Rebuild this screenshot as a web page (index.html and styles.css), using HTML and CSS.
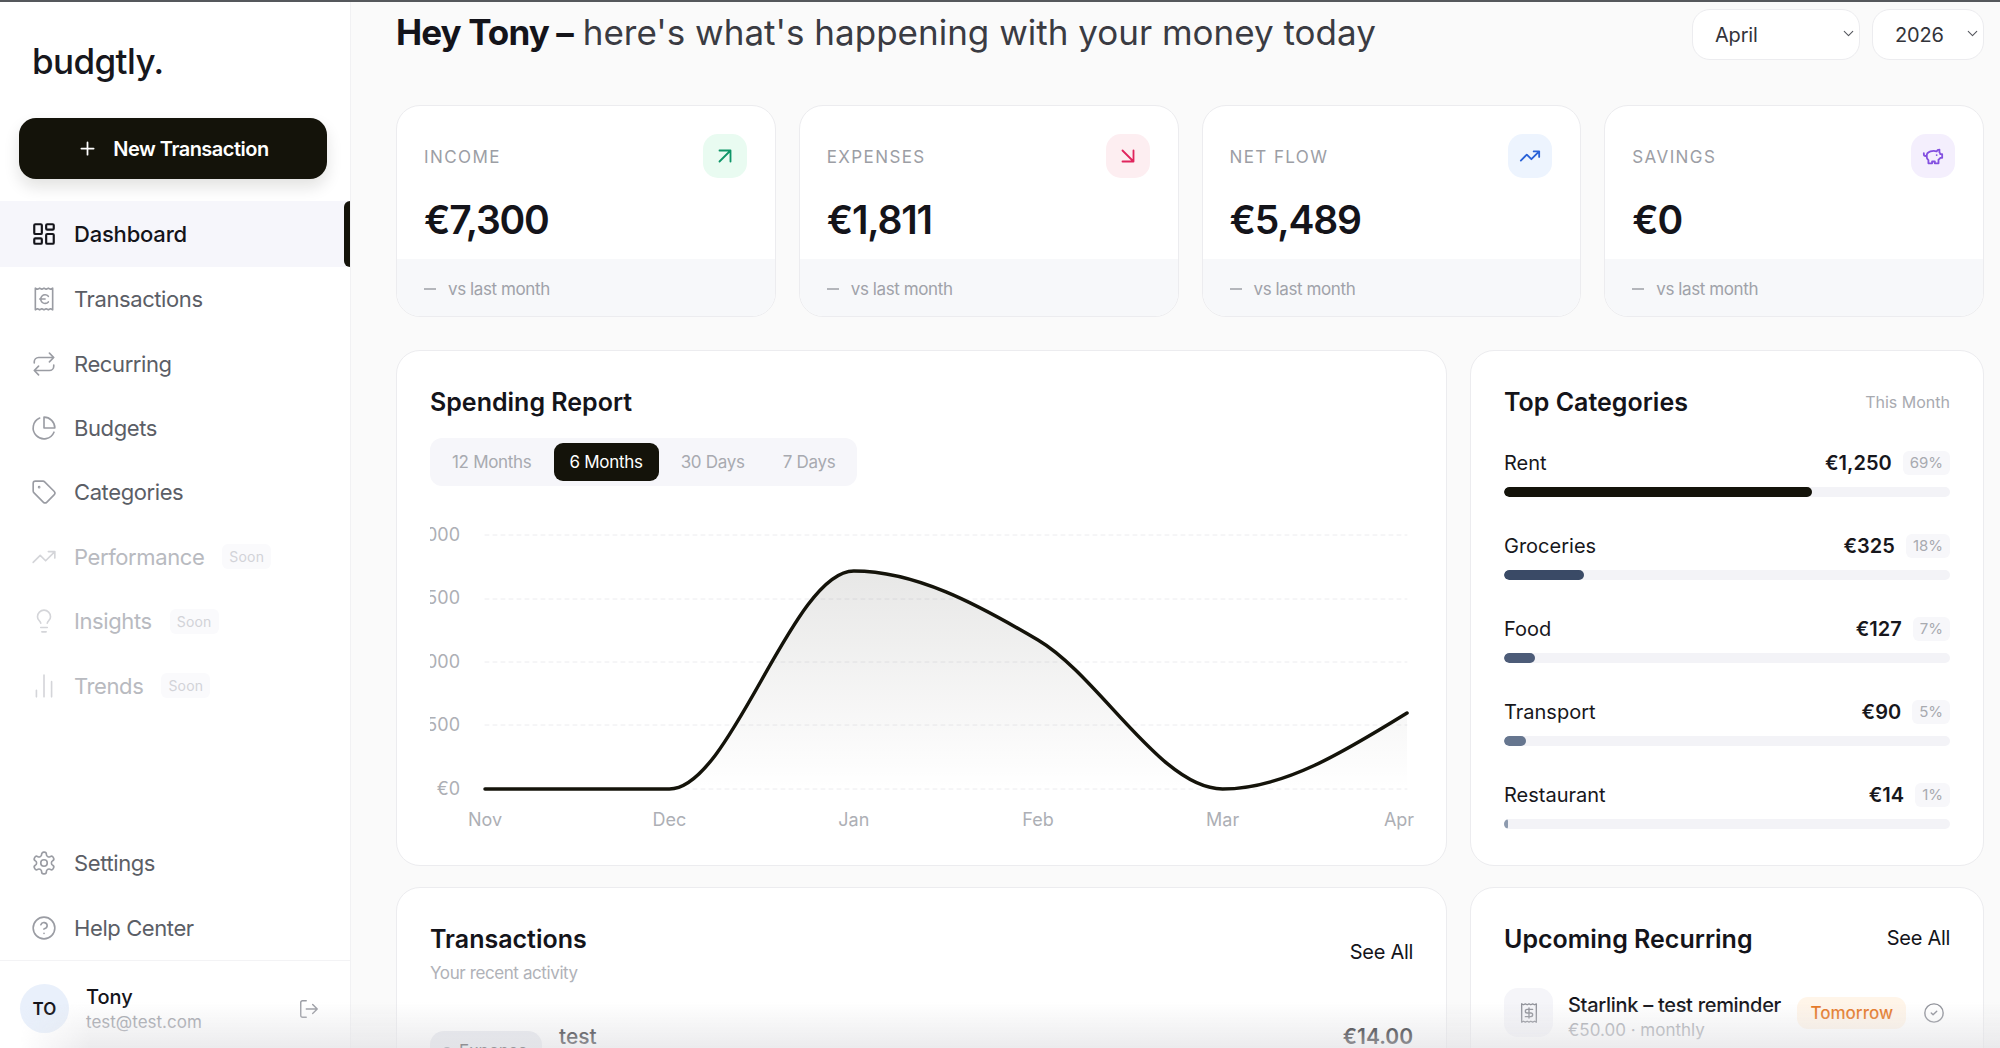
FILE: index.html
```html
<!DOCTYPE html>
<html lang="en">
<head>
    <meta charset="UTF-8">
    <meta name="viewport" content="width=device-width, initial-scale=1.0">
    <title>Dashboard - budgtly</title>
    <link rel="stylesheet" href="styles.css">
</head>
<body>

    <!-- icon set -->
    <svg class="sprite" xmlns="http://www.w3.org/2000/svg">
        <symbol id="i-plus" viewBox="0 0 24 24"><path d="M5 12h14M12 5v14"/></symbol>
        <symbol id="i-dashboard" viewBox="0 0 24 24"><rect x="3" y="3" width="7" height="9" rx="1"/><rect x="14" y="3" width="7" height="5" rx="1"/><rect x="14" y="12" width="7" height="9" rx="1"/><rect x="3" y="16" width="7" height="5" rx="1"/></symbol>
        <symbol id="i-receipt" viewBox="0 0 24 24"><path d="M4 2v20l2-1 2 1 2-1 2 1 2-1 2 1 2-1 2 1V2l-2 1-2-1-2 1-2-1-2 1-2-1-2 1Z"/><path d="M8 12h5M16 9.5a4 4 0 1 0 0 5.2"/></symbol>
        <symbol id="i-repeat" viewBox="0 0 24 24"><path d="m17 2 4 4-4 4M3 11v-1a4 4 0 0 1 4-4h14M7 22l-4-4 4-4M21 13v1a4 4 0 0 1-4 4H3"/></symbol>
        <symbol id="i-pie" viewBox="0 0 24 24"><path d="M21.21 15.89A10 10 0 1 1 8 2.83"/><path d="M22 12A10 10 0 0 0 12 2v10z"/></symbol>
        <symbol id="i-tag" viewBox="0 0 24 24"><path d="M12.586 2.586A2 2 0 0 0 11.172 2H4a2 2 0 0 0-2 2v7.172a2 2 0 0 0 .586 1.414l8.704 8.704a2.426 2.426 0 0 0 3.42 0l6.58-6.58a2.426 2.426 0 0 0 0-3.42z"/><circle cx="7.5" cy="7.5" r=".5"/></symbol>
        <symbol id="i-trend" viewBox="0 0 24 24"><path d="M16 7h6v6M22 7l-8.5 8.5-5-5L2 17"/></symbol>
        <symbol id="i-bulb" viewBox="0 0 24 24"><path d="M15 14c.2-1 .7-1.7 1.5-2.5 1-.9 1.5-2.2 1.5-3.5A6 6 0 0 0 6 8c0 1 .2 2.2 1.5 3.5.7.7 1.3 1.5 1.5 2.5M9 18h6M10 22h4"/></symbol>
        <symbol id="i-bars" viewBox="0 0 24 24"><path d="M5 22v-6M12 22V2M19 22V8"/></symbol>
        <symbol id="i-gear" viewBox="0 0 24 24"><path d="M12.22 2h-.44a2 2 0 0 0-2 2v.18a2 2 0 0 1-1 1.73l-.43.25a2 2 0 0 1-2 0l-.15-.08a2 2 0 0 0-2.73.73l-.22.38a2 2 0 0 0 .73 2.73l.15.1a2 2 0 0 1 1 1.72v.51a2 2 0 0 1-1 1.74l-.15.09a2 2 0 0 0-.73 2.73l.22.38a2 2 0 0 0 2.73.73l.15-.08a2 2 0 0 1 2 0l.43.25a2 2 0 0 1 1 1.73V20a2 2 0 0 0 2 2h.44a2 2 0 0 0 2-2v-.18a2 2 0 0 1 1-1.73l.43-.25a2 2 0 0 1 2 0l.15.08a2 2 0 0 0 2.73-.73l.22-.39a2 2 0 0 0-.73-2.73l-.15-.08a2 2 0 0 1-1-1.74v-.5a2 2 0 0 1 1-1.74l.15-.09a2 2 0 0 0 .73-2.73l-.22-.38a2 2 0 0 0-2.73-.73l-.15.08a2 2 0 0 1-2 0l-.43-.25a2 2 0 0 1-1-1.73V4a2 2 0 0 0-2-2z"/><circle cx="12" cy="12" r="3"/></symbol>
        <symbol id="i-help" viewBox="0 0 24 24"><circle cx="12" cy="12" r="10"/><path d="M9.09 9a3 3 0 0 1 5.83 1c0 2-3 3-3 3M12 17h.01"/></symbol>
        <symbol id="i-logout" viewBox="0 0 24 24"><path d="M9 21H5a2 2 0 0 1-2-2V5a2 2 0 0 1 2-2h4M16 17l5-5-5-5M21 12H9"/></symbol>
        <symbol id="i-up" viewBox="0 0 24 24"><path d="M6 6h12v12M6 18 18 6"/></symbol>
        <symbol id="i-down" viewBox="0 0 24 24"><path d="m6 6 12 12M18 6v12H6"/></symbol>
        <symbol id="i-pig" viewBox="0 0 24 24"><path d="M19 5c-1.5 0-2.8 1.4-3 2-3.5-1.5-11-.3-11 5 0 1.8 0 3 2 4.5V20h4v-2h3v2h4v-4c1-.5 1.7-1 2-2h2v-4h-2c0-1-.5-1.5-1-2V5z"/><path d="M2 9v1c0 1.1.9 2 2 2h1M16 11h.01"/></symbol>
        <symbol id="i-chevron" viewBox="0 0 24 24"><path d="m6 9 6 6 6-6"/></symbol>
        <symbol id="i-dollar" viewBox="0 0 24 24"><path d="M4 2v20l2-1 2 1 2-1 2 1 2-1 2 1 2-1 2 1V2l-2 1-2-1-2 1-2-1-2 1-2-1-2 1Z"/><path d="M16 8h-6a2 2 0 1 0 0 4h4a2 2 0 1 1 0 4H8M12 17.5v-11"/></symbol>
        <symbol id="i-check" viewBox="0 0 24 24"><circle cx="12" cy="12" r="10"/><path d="m9 12 2 2 4-4"/></symbol>
    </svg>

    <div class="app">
        <aside class="sidebar">
            <div class="logo">budgtly.</div>
            <button class="new-btn"><svg class="icon-plus"><use href="#i-plus"/></svg>New Transaction</button>

            <nav class="nav">
                <a class="nav-item active"><svg class="nav-icon"><use href="#i-dashboard"/></svg>Dashboard</a>
                <a class="nav-item"><svg class="nav-icon"><use href="#i-receipt"/></svg>Transactions</a>
                <a class="nav-item"><svg class="nav-icon"><use href="#i-repeat"/></svg>Recurring</a>
                <a class="nav-item"><svg class="nav-icon"><use href="#i-pie"/></svg>Budgets</a>
                <a class="nav-item"><svg class="nav-icon"><use href="#i-tag"/></svg>Categories</a>
                <a class="nav-item soon"><svg class="nav-icon"><use href="#i-trend"/></svg>Performance<span class="soon-tag">Soon</span></a>
                <a class="nav-item soon"><svg class="nav-icon"><use href="#i-bulb"/></svg>Insights<span class="soon-tag">Soon</span></a>
                <a class="nav-item soon"><svg class="nav-icon"><use href="#i-bars"/></svg>Trends<span class="soon-tag">Soon</span></a>
            </nav>

            <nav class="nav nav-bottom">
                <a class="nav-item"><svg class="nav-icon"><use href="#i-gear"/></svg>Settings</a>
                <a class="nav-item"><svg class="nav-icon"><use href="#i-help"/></svg>Help Center</a>
            </nav>

            <div class="user">
                <div class="avatar">TO</div>
                <div class="user-info">
                    <div class="user-name">Tony</div>
                    <div class="user-mail">test@test.com</div>
                </div>
                <svg class="logout"><use href="#i-logout"/></svg>
            </div>
        </aside>

        <main class="main">
            <header class="top">
                <h1 class="greeting"><strong>Hey Tony –</strong> here's what's happening with your money today</h1>
                <div class="filters">
                    <div class="select-wrap month">
                        <select><option>April</option></select>
                        <svg class="chevron"><use href="#i-chevron"/></svg>
                    </div>
                    <div class="select-wrap year">
                        <select><option>2026</option></select>
                        <svg class="chevron"><use href="#i-chevron"/></svg>
                    </div>
                </div>
            </header>

            <section class="stats">
                <div class="stat">
                    <div class="stat-body">
                        <div class="stat-head"><span class="stat-label">INCOME</span><span class="stat-icon green"><svg><use href="#i-up"/></svg></span></div>
                        <div class="stat-value">€7,300</div>
                    </div>
                    <div class="stat-foot"><span class="dash"></span>vs last month</div>
                </div>
                <div class="stat">
                    <div class="stat-body">
                        <div class="stat-head"><span class="stat-label">EXPENSES</span><span class="stat-icon red"><svg><use href="#i-down"/></svg></span></div>
                        <div class="stat-value">€1,811</div>
                    </div>
                    <div class="stat-foot"><span class="dash"></span>vs last month</div>
                </div>
                <div class="stat">
                    <div class="stat-body">
                        <div class="stat-head"><span class="stat-label">NET FLOW</span><span class="stat-icon blue"><svg><use href="#i-trend"/></svg></span></div>
                        <div class="stat-value">€5,489</div>
                    </div>
                    <div class="stat-foot"><span class="dash"></span>vs last month</div>
                </div>
                <div class="stat">
                    <div class="stat-body">
                        <div class="stat-head"><span class="stat-label">SAVINGS</span><span class="stat-icon purple"><svg><use href="#i-pig"/></svg></span></div>
                        <div class="stat-value">€0</div>
                    </div>
                    <div class="stat-foot"><span class="dash"></span>vs last month</div>
                </div>
            </section>

            <section class="row row-mid">
                <div class="card report">
                    <h2 class="card-title">Spending Report</h2>
                    <div class="tabs">
                        <span class="tab">12 Months</span>
                        <span class="tab active">6 Months</span>
                        <span class="tab">30 Days</span>
                        <span class="tab">7 Days</span>
                    </div>
                    <svg class="chart" viewBox="430 520 990 316" width="990" height="316">
                        <defs>
                            <linearGradient id="area" x1="0" y1="0" x2="0" y2="1">
                                <stop offset="0" stop-color="#14130a" stop-opacity=".1"/>
                                <stop offset="1" stop-color="#14130a" stop-opacity="0"/>
                            </linearGradient>
                        </defs>
                        <g class="grid">
                            <path d="M485 533H1407M485 597H1407M485 660H1407M485 723H1407M485 787H1407"/>
                        </g>
                        <path class="area" d="M485 787H669.4C730.9 787 792.3 569 853.8 569C915.3 569 976.5 601.7 1038 638C1099.5 674.3 1161.1 787 1222.6 787C1284 787 1345.5 749 1407 711V787Z"/>
                        <path class="curve" d="M485 787H669.4C730.9 787 792.3 569 853.8 569C915.3 569 976.5 601.7 1038 638C1099.5 674.3 1161.1 787 1222.6 787C1284 787 1345.5 749 1407 711"/>
                        <g class="y-axis">
                            <text x="460" y="539">€2,000</text>
                            <text x="460" y="602">€1,500</text>
                            <text x="460" y="666">€1,000</text>
                            <text x="460" y="729">€500</text>
                            <text x="460" y="793">€0</text>
                        </g>
                        <g class="x-axis">
                            <text x="485" y="824">Nov</text>
                            <text x="669.4" y="824">Dec</text>
                            <text x="853.8" y="824">Jan</text>
                            <text x="1038" y="824">Feb</text>
                            <text x="1222.6" y="824">Mar</text>
                            <text x="1399" y="824">Apr</text>
                        </g>
                    </svg>
                </div>

                <div class="card top-cats">
                    <div class="card-head">
                        <h2 class="card-title">Top Categories</h2>
                        <span class="card-note">This Month</span>
                    </div>
                    <div class="cat">
                        <div class="cat-line"><span class="cat-name">Rent</span><span class="cat-amount">€1,250</span><span class="cat-pct">69%</span></div>
                        <div class="bar"><div class="bar-fill c1" style="width: 69%"></div></div>
                    </div>
                    <div class="cat">
                        <div class="cat-line"><span class="cat-name">Groceries</span><span class="cat-amount">€325</span><span class="cat-pct">18%</span></div>
                        <div class="bar"><div class="bar-fill c2" style="width: 18%"></div></div>
                    </div>
                    <div class="cat">
                        <div class="cat-line"><span class="cat-name">Food</span><span class="cat-amount">€127</span><span class="cat-pct">7%</span></div>
                        <div class="bar"><div class="bar-fill c3" style="width: 7%"></div></div>
                    </div>
                    <div class="cat">
                        <div class="cat-line"><span class="cat-name">Transport</span><span class="cat-amount">€90</span><span class="cat-pct">5%</span></div>
                        <div class="bar"><div class="bar-fill c4" style="width: 5%"></div></div>
                    </div>
                    <div class="cat">
                        <div class="cat-line"><span class="cat-name">Restaurant</span><span class="cat-amount">€14</span><span class="cat-pct">1%</span></div>
                        <div class="bar"><div class="bar-fill c5" style="width: 1%"></div></div>
                    </div>
                </div>
            </section>

            <section class="row row-low">
                <div class="card list-card">
                    <div class="card-head">
                        <div>
                            <h2 class="card-title">Transactions</h2>
                            <div class="card-sub">Your recent activity</div>
                        </div>
                        <a class="see-all">See All</a>
                    </div>
                    <div class="tx">
                        <span class="tx-pill"><span class="tx-dot"></span>Expense</span>
                        <span class="tx-name">test</span>
                        <span class="tx-amount">€14.00</span>
                    </div>
                </div>
                <div class="card list-card">
                    <div class="card-head">
                        <h2 class="card-title">Upcoming Recurring</h2>
                        <a class="see-all">See All</a>
                    </div>
                    <div class="rec">
                        <span class="rec-icon"><svg><use href="#i-dollar"/></svg></span>
                        <div class="rec-info">
                            <div class="rec-name">Starlink – test reminder</div>
                            <div class="rec-sub">€50.00 · monthly</div>
                        </div>
                        <span class="rec-when">Tomorrow</span>
                        <svg class="rec-check"><use href="#i-check"/></svg>
                    </div>
                </div>
            </section>
        </main>
    </div>

    <div class="bottom-fade"></div>

</body>
</html>
```

FILE: styles.css
```css
* {
    box-sizing: border-box;
}
html, body {
    height: 100%;
}
body {
    margin: 0;
    overflow: hidden;
    font-family: Inter, "Noto Sans", sans-serif;
    color: #14141a;
    background-color: #fafafa;
    border-top: 2px solid #55585c;
}
.sprite {
    display: none;
}
svg {
    fill: none;
    stroke: currentColor;
    stroke-width: 2;
    stroke-linecap: round;
    stroke-linejoin: round;
}
.app {
    display: flex;
    height: 100%;
}

/* sidebar */
.sidebar {
    width: 351px;
    flex-shrink: 0;
    display: flex;
    flex-direction: column;
    background-color: #fff;
    border-right: 1px solid #f1f1f3;
}
.logo {
    margin: 37px 0 0 32px;
    font-size: 35px;
    line-height: 44px;
    font-weight: 500;
    letter-spacing: -0.6px;
    color: #17171c;
}
.new-btn {
    display: flex;
    align-items: center;
    justify-content: center;
    gap: 15px;
    width: 308px;
    height: 61px;
    margin: 35px 0 0 19px;
    border: none;
    border-radius: 17px;
    background-color: #14130a;
    color: #fff;
    font-family: inherit;
    font-size: 20px;
    font-weight: 600;
    letter-spacing: -0.5px;
    box-shadow: 0 8px 16px rgba(20, 19, 10, 0.12);
}
.icon-plus {
    width: 21px;
    height: 21px;
}
.nav {
    margin-top: 22px;
}
.nav-item {
    position: relative;
    display: flex;
    align-items: center;
    height: 64.4px;
    padding-left: 31px;
    font-size: 22px;
    letter-spacing: -0.4px;
    color: #5b5e66;
}
.nav-icon {
    width: 26px;
    height: 26px;
    margin-right: 17px;
    stroke-width: 1.5;
    color: #9a9ca3;
}
.nav-item.active {
    height: 66px;
    background-color: #f6f6fb;
    color: #14141a;
    font-weight: 500;
    letter-spacing: -0.2px;
}
.nav-item.active::after {
    content: "";
    position: absolute;
    top: 0;
    right: 0;
    bottom: 0;
    width: 6px;
    border-radius: 6px 0 0 6px;
    background-color: #14130a;
}
.nav-item.active .nav-icon {
    color: #14141a;
    stroke-width: 2;
}
.nav-item.soon {
    color: #b8bac0;
}
.nav-item.soon .nav-icon {
    color: #d4d5d9;
}
.soon-tag {
    margin-left: 18px;
    padding: 4px 7px;
    border-radius: 6px;
    background-color: #fafafc;
    color: #d2d3d8;
    font-size: 14px;
    line-height: 17px;
    letter-spacing: 0.2px;
}
.nav-bottom {
    margin-top: auto;
}
.user {
    display: flex;
    align-items: center;
    height: 88px;
    padding: 8px 30px 0 20px;
    border-top: 1px solid #f3f3f5;
}
.avatar {
    width: 49px;
    height: 49px;
    display: flex;
    align-items: center;
    justify-content: center;
    border-radius: 50%;
    background-color: #e9f0fb;
    color: #14141a;
    font-size: 17px;
    font-weight: 600;
}
.user-info {
    flex: 1;
    margin-left: 17px;
}
.user-name {
    font-size: 20px;
    line-height: 26px;
    font-weight: 500;
}
.user-mail {
    font-size: 17px;
    line-height: 24px;
    color: #a0a2a9;
}
.logout {
    width: 22px;
    height: 22px;
    stroke-width: 1.5;
    color: #9a9ca3;
}

/* main */
.main {
    flex: 1;
    min-width: 0;
    padding: 0 16px 0 45px;
}
.top {
    display: flex;
    justify-content: space-between;
    align-items: flex-start;
    height: 103px;
    padding-top: 7px;
}
.greeting {
    margin: -1px 0 0 0;
    font-size: 35px;
    line-height: 48px;
    font-weight: 400;
    color: #3a3b42;
}
.greeting strong {
    font-weight: 700;
    letter-spacing: -0.9px;
    color: #14141a;
}
.filters {
    display: flex;
    gap: 12px;
}
.select-wrap {
    position: relative;
    height: 51px;
}
.month {
    width: 168px;
}
.year {
    width: 112px;
}
.select-wrap select {
    width: 100%;
    height: 100%;
    padding: 0 0 0 22px;
    appearance: none;
    border: 1px solid #ececef;
    border-radius: 18px;
    background-color: #fff;
    color: #33343a;
    font-family: inherit;
    font-size: 20px;
    letter-spacing: -0.2px;
}
.chevron {
    position: absolute;
    top: 16px;
    right: 3px;
    width: 17px;
    height: 17px;
    stroke-width: 1.5;
    color: #55575e;
    pointer-events: none;
}

/* stat cards */
.stats {
    display: grid;
    grid-template-columns: repeat(4, 1fr);
    gap: 23px;
}
.stat {
    height: 212px;
    border: 1px solid #ececef;
    border-radius: 24px;
    background-color: #fff;
    overflow: hidden;
}
.stat-body {
    height: 153px;
    padding: 28px 28px 0 27px;
}
.stat-head {
    display: flex;
    justify-content: space-between;
    align-items: center;
}
.stat-label {
    margin-top: 2px;
    font-size: 17px;
    letter-spacing: 1.4px;
    color: #9c9ea5;
}
.stat-icon {
    display: flex;
    align-items: center;
    justify-content: center;
    width: 44px;
    height: 44px;
    border-radius: 15px;
}
.stat-icon svg {
    width: 22px;
    height: 22px;
}
.green {
    background-color: #e9fbf1;
    color: #0f9568;
}
.red {
    background-color: #fdeef1;
    color: #e0255d;
}
.blue {
    background-color: #edf4fe;
    color: #2a62d8;
}
.purple {
    background-color: #f4effd;
    color: #8350e0;
}
.stat-value {
    margin-top: 16px;
    font-size: 39px;
    line-height: 52px;
    font-weight: 600;
    letter-spacing: -1.2px;
    color: #14141a;
}
.stat-foot {
    display: flex;
    align-items: center;
    height: 58px;
    padding: 2px 0 0 27px;
    background-color: #f7f8fa;
    font-size: 17px;
    letter-spacing: -0.4px;
    color: #a0a2a9;
}
.dash {
    width: 12px;
    height: 2px;
    margin-right: 12px;
    background-color: #b4b6bb;
}

/* cards */
.row {
    display: grid;
    grid-template-columns: 1051px 514px;
    gap: 23px;
}
.row-mid {
    margin-top: 33px;
    height: 514px;
}
.row-low {
    margin-top: 23px;
}
.card {
    border: 1px solid #ececef;
    border-radius: 24px;
    background-color: #fff;
    padding: 34px 33px 0 33px;
}
.card-title {
    margin: 0;
    font-size: 25px;
    line-height: 34px;
    font-weight: 600;
    color: #14141a;
}
.card-head {
    display: flex;
    justify-content: space-between;
    align-items: center;
}
.card-note {
    font-size: 16px;
    color: #a8aab0;
}
.card-sub {
    margin-top: 5px;
    font-size: 17px;
    line-height: 24px;
    letter-spacing: -0.4px;
    color: #b0b2b8;
}
.see-all {
    font-size: 20px;
    letter-spacing: -0.3px;
    color: #14141a;
}

/* spending report */
.tabs {
    display: inline-flex;
    align-items: center;
    gap: 6px;
    height: 48px;
    margin-top: 19px;
    padding: 0 6px;
    border-radius: 12px;
    background-color: #f6f6fa;
    vertical-align: top;
}
.tab {
    padding: 0 16px;
    font-size: 17px;
    letter-spacing: -0.3px;
    line-height: 38px;
    color: #a8aab0;
}
.tab.active {
    border-radius: 9px;
    background-color: #14130a;
    color: #fff;
}
.chart {
    display: block;
    margin-top: 36px;
}
.grid path {
    stroke: #ececef;
    stroke-width: 1;
    stroke-dasharray: 4 4;
}
.area {
    fill: url(#area);
    stroke: none;
}
.curve {
    stroke: #14130a;
    stroke-width: 3.5;
}
.chart text {
    fill: #adafb5;
    stroke: none;
    font-size: 18px;
}
.y-axis text {
    text-anchor: end;
}
.x-axis text {
    text-anchor: middle;
}

/* top categories */
.top-cats .card-head {
    margin-bottom: 31px;
}
.cat {
    height: 83px;
}
.cat-line {
    display: flex;
    align-items: center;
    height: 26px;
}
.cat-name {
    flex: 1;
    font-size: 20px;
    color: #17171c;
}
.cat-amount {
    font-size: 20px;
    font-weight: 600;
    color: #17171c;
}
.cat-pct {
    margin-left: 11px;
    padding: 0 7px;
    border-radius: 6px;
    background-color: #f7f7fa;
    color: #a8aab0;
    font-size: 15px;
    line-height: 24px;
}
.bar {
    height: 10px;
    margin-top: 11px;
    border-radius: 5px;
    background-color: #f3f3f7;
    overflow: hidden;
}
.bar-fill {
    height: 100%;
    border-radius: 5px;
}
.c1 {
    background-color: #14130a;
}
.c2 {
    background-color: #3a4a66;
}
.c3 {
    background-color: #4d5c78;
}
.c4 {
    background-color: #66768f;
}
.c5 {
    background-color: #8d9aae;
}

/* lower lists */
.list-card {
    height: 300px;
}
.list-card .see-all {
    margin-bottom: 3px;
}
.tx {
    display: flex;
    align-items: flex-start;
    margin-top: 39px;
}
.tx-pill {
    display: flex;
    align-items: center;
    gap: 8px;
    width: 112px;
    height: 40px;
    padding-left: 13px;
    margin-top: 7px;
    border-radius: 14px;
    background-color: #e6e8ee;
    font-size: 17px;
    color: #14141a;
}
.tx-dot {
    width: 8px;
    height: 8px;
    border-radius: 50%;
    background-color: #5f6878;
}
.tx-name {
    flex: 1;
    margin-left: 17px;
    font-size: 21px;
    font-weight: 500;
}
.tx-amount {
    font-size: 21px;
    font-weight: 600;
}
.rec {
    display: flex;
    align-items: flex-start;
    margin-top: 32px;
}
.rec-icon {
    display: flex;
    align-items: center;
    justify-content: center;
    width: 49px;
    height: 49px;
    border-radius: 14px;
    background-color: #f5f5f9;
    color: #8e9098;
}
.rec-icon svg {
    width: 22px;
    height: 22px;
    stroke-width: 1.5;
}
.rec-info {
    flex: 1;
    margin: 3px 0 0 15px;
}
.rec-name {
    font-size: 20px;
    line-height: 28px;
    font-weight: 500;
    letter-spacing: -0.3px;
    white-space: nowrap;
}
.rec-sub {
    font-size: 17px;
    line-height: 22px;
    color: #a8aab0;
}
.rec-when {
    margin-top: 9px;
    padding: 0 13px;
    border-radius: 11px;
    background-color: #fff5e9;
    color: #e5741c;
    font-size: 17px;
    font-weight: 500;
    line-height: 32px;
}
.rec-check {
    width: 22px;
    height: 22px;
    margin: 14px 5px 0 17px;
    stroke-width: 1.5;
    color: #8e9098;
}

/* fade over the bottom edge of the window */
.bottom-fade {
    position: fixed;
    left: 0;
    right: 0;
    bottom: 0;
    height: 46px;
    background: linear-gradient(to bottom, rgba(225, 225, 228, 0), rgba(225, 225, 228, 0.65));
    mask-image: linear-gradient(to right, transparent 20px, black 90px);
    pointer-events: none;
}
```
